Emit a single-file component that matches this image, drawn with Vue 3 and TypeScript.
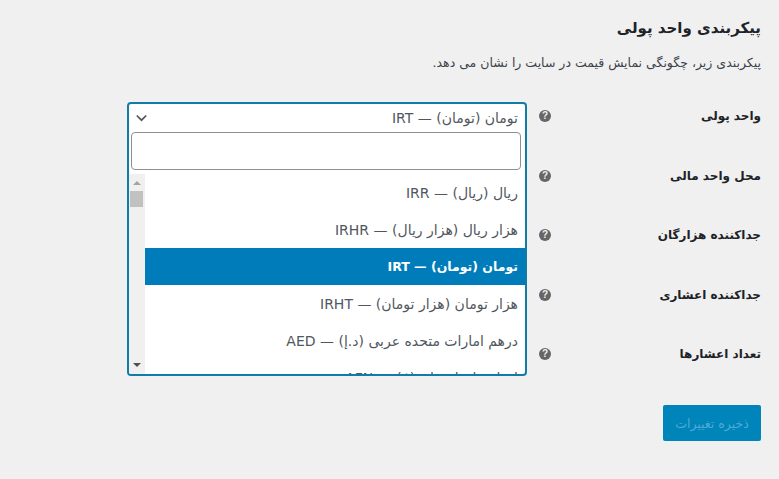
<script setup lang="ts">
interface Row { label: string }
const rows: Row[] = [
  { label: 'واحد پولی' },
  { label: 'محل واحد مالی' },
  { label: 'جداکننده هزارگان' },
  { label: 'جداکننده اعشاری' },
  { label: 'تعداد اعشارها' },
]
const options = [
  { text: 'ریال (ریال) — IRR', active: false },
  { text: 'هزار ریال (هزار ریال) — IRHR', active: false },
  { text: 'تومان (تومان) — IRT', active: true },
  { text: 'هزار تومان (هزار تومان) — IRHT', active: false },
  { text: 'درهم امارات متحده عربی (د.إ) — AED', active: false },
  { text: 'افغانی افغانستان (؋) — AFN', active: false },
]
</script>

<template>
  <main class="page" dir="rtl">
    <h1 class="title">پیکربندی واحد پولی</h1>
    <p class="intro">پیکربندی زیر، چگونگی نمایش قیمت در سایت را نشان می دهد.</p>
    <div class="form">
      <div v-for="(row, i) in rows" :key="row.label" class="row">
        <label class="label">{{ row.label }}</label>
        <span class="help">?</span>
        <div class="field">
          <div v-if="i === 0" class="dropdown">
            <div class="current">
              <span class="current-text">تومان (تومان) — IRT</span>
              <svg class="chevron" viewBox="0 0 11 8" width="11" height="8" aria-hidden="true">
                <path d="M0.8 1.5 L5.5 6.2 L10.2 1.5" fill="none" stroke="#50575e" stroke-width="1.7" />
              </svg>
            </div>
            <div class="search-wrap"><input class="search" type="text" /></div>
            <div class="list-wrap">
              <ul class="list">
                <li v-for="o in options" :key="o.text" class="option" :class="{ active: o.active }">{{ o.text }}</li>
              </ul>
              <div class="scrollbar">
                <span class="arrow up"></span>
                <span class="thumb"></span>
                <span class="arrow down"></span>
              </div>
            </div>
          </div>
        </div>
      </div>
    </div>
    <div class="actions">
      <button class="save" type="button">ذخیره تغییرات</button>
    </div>
  </main>
</template>

<style>
html, body { margin: 0; background: #f0f0f1; }
</style>

<style scoped>
.page {
  width: 779px;
  height: 479px;
  box-sizing: border-box;
  padding: 15px 18px 0 0;
  background: #f0f0f1;
  font-family: "DejaVu Sans", sans-serif;
  color: #3c434a;
  overflow: hidden;
}
.title {
  margin: 0;
  font-size: 15px;
  line-height: 26px;
  font-weight: 700;
  color: #1d2327;
}
.intro {
  margin: 12px 0 0;
  font-size: 12.5px;
  line-height: 20px;
  color: #3c434a;
}
.form {
  margin-top: 29px;
  display: flex;
  flex-direction: column;
}
.row {
  height: 59.5px;
  display: grid;
  grid-template-columns: 146px 88px 400px;
  align-items: start;
}
.label {
  font-size: 12px;
  font-weight: 700;
  line-height: 28px;
  color: #1d2327;
}
.help {
  width: 12px;
  height: 12px;
  margin: 8px 0 0 12px;
  justify-self: end;
  border-radius: 50%;
  background: #666;
  color: #f0f0f1;
  font: 700 10px/12px "Liberation Sans", sans-serif;
  text-align: center;
}
.field { position: relative; height: 59.5px; }
.dropdown {
  position: absolute;
  top: 0;
  right: 0;
  z-index: 2;
  width: 400px;
  height: 274px;
  box-sizing: border-box;
  border: 2px solid #127ca8;
  border-radius: 4px;
  background: #fff;
  display: flex;
  flex-direction: column;
  overflow: hidden;
}
.current {
  height: 28px;
  flex: none;
  display: flex;
  align-items: center;
  justify-content: space-between;
  padding: 0 7px;
  font-size: 14px;
  color: #50575e;
}
.chevron { flex: none; }
.search-wrap {
  flex: none;
  padding: 0 4px 0 2px;
}
.search {
  display: block;
  width: 100%;
  height: 38px;
  box-sizing: border-box;
  border: 1px solid #8c8f94;
  border-radius: 4px;
  background: #fff;
  outline: none;
}
.list-wrap {
  flex: 1;
  min-height: 0;
  margin-top: 4px;
  display: flex;
  overflow: hidden;
}
.list {
  flex: 1;
  margin: 0;
  padding: 0;
  list-style: none;
  overflow: hidden;
}
.option {
  height: 37px;
  box-sizing: border-box;
  padding: 0 7px;
  display: flex;
  align-items: center;
  font-size: 14px;
  color: #50575e;
  white-space: nowrap;
}
.option.active {
  background: #007cba;
  color: #fff;
  font-weight: 700;
  font-size: 12.5px;
}
.scrollbar {
  flex: none;
  width: 16px;
  background: #f0f0f1;
  display: flex;
  flex-direction: column;
  align-items: center;
}
.thumb {
  width: 13px;
  height: 16px;
  margin: 6px 2px 0 0;
  background: #c1c1c1;
}
.arrow {
  width: 0;
  height: 0;
  border-left: 4px solid transparent;
  border-right: 4px solid transparent;
}
.arrow.up {
  margin-top: 7px;
  border-bottom: 4px solid #a3a3a3;
}
.arrow.down {
  margin-top: auto;
  margin-bottom: 7px;
  border-top: 4px solid #505050;
}
.actions {
  margin-top: 5.5px;
  display: flex;
}
.save {
  width: 98px;
  height: 36px;
  border: 0;
  border-radius: 2px;
  background: #0085ba;
  color: #4eaad6;
  font-family: inherit;
  font-size: 12.5px;
  padding: 0;
}
</style>
